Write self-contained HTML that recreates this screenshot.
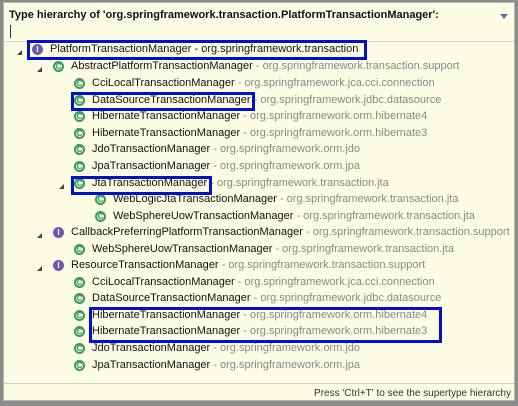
<!DOCTYPE html>
<html><head><style>
body{margin:0;width:518px;height:406px;overflow:hidden;background:#8c8c8c;font-family:"Liberation Sans",sans-serif;}
#w{position:absolute;left:3px;top:2px;width:512px;height:399px;background:#fdfde6;border:1px solid #b8b8a8;box-sizing:border-box;}
.t{position:absolute;left:5px;top:6px;font-weight:bold;font-size:11px;color:#111;}
.dd{position:absolute;left:496px;top:11px;width:0;height:0;border-left:4px solid transparent;border-right:4px solid transparent;border-top:5px solid #4a7ab0;}
.cur{position:absolute;left:6px;top:22px;width:1px;height:13px;background:#333;}
.sep{position:absolute;left:0;right:0;top:38px;border-top:1px solid #d8d8c8;}
.sb{position:absolute;left:0;right:0;top:380px;border-top:1px solid #d0d0c0;}
.st{position:absolute;right:3px;top:385px;font-size:10px;color:#333;}
.r{position:absolute;height:16px;font-size:11px;line-height:16px;white-space:nowrap;color:#111;}
.r span{color:#888;}
.ic{position:absolute;width:11px;height:11px;border-radius:50%;font-size:8px;line-height:8px;text-align:center;font-weight:bold;box-sizing:border-box;}
.g{border:2px solid #3a9a50;color:#3a9a50;background:#e8f5e8;}
.i{background:#6a5ab0;color:#fff;line-height:11px;}
.ar{position:absolute;width:0;height:0;border-left:5px solid transparent;border-bottom:5px solid #444;}
.bx{position:absolute;border:3px solid #0010d0;box-sizing:border-box;}
</style></head><body><div id="w">
<div class="t">Type hierarchy of 'org.springframework.transaction.PlatformTransactionManager':</div>
<div class="dd"></div><div class="cur"></div><div class="sep"></div>
<div class="sb"></div><div class="st">Press 'Ctrl+T' to see the supertype hierarchy</div>

<div class="ar" style="left:13px;top:47px"></div><div class="ic i" style="left:28px;top:41px">I</div><div class="r" style="left:46px;top:38px">PlatformTransactionManager - org.springframework.transaction</div>
<div class="ar" style="left:33px;top:64px"></div><div class="ic g" style="left:49px;top:58px">C</div><div class="r" style="left:67px;top:55px">AbstractPlatformTransactionManager <span>- org.springframework.transaction.support</span></div>
<div class="ic g" style="left:70px;top:75px">C</div><div class="r" style="left:88px;top:72px">CciLocalTransactionManager <span>- org.springframework.jca.cci.connection</span></div>
<div class="ic g" style="left:70px;top:92px">C</div><div class="r" style="left:88px;top:89px">DataSourceTransactionManager <span>- org.springframework.jdbc.datasource</span></div>
<div class="ic g" style="left:70px;top:108px">C</div><div class="r" style="left:88px;top:105px">HibernateTransactionManager <span>- org.springframework.orm.hibernate4</span></div>
<div class="ic g" style="left:70px;top:125px">C</div><div class="r" style="left:88px;top:122px">HibernateTransactionManager <span>- org.springframework.orm.hibernate3</span></div>
<div class="ic g" style="left:70px;top:141px">C</div><div class="r" style="left:88px;top:138px">JdoTransactionManager <span>- org.springframework.orm.jdo</span></div>
<div class="ic g" style="left:70px;top:158px">C</div><div class="r" style="left:88px;top:155px">JpaTransactionManager <span>- org.springframework.orm.jpa</span></div>
<div class="ar" style="left:55px;top:181px"></div><div class="ic g" style="left:70px;top:175px">C</div><div class="r" style="left:88px;top:172px">JtaTransactionManager <span>- org.springframework.transaction.jta</span></div>
<div class="ic g" style="left:91px;top:191px">C</div><div class="r" style="left:109px;top:188px">WebLogicJtaTransactionManager <span>- org.springframework.transaction.jta</span></div>
<div class="ic g" style="left:91px;top:208px">C</div><div class="r" style="left:109px;top:205px">WebSphereUowTransactionManager <span>- org.springframework.transaction.jta</span></div>
<div class="ar" style="left:33px;top:230px"></div><div class="ic i" style="left:49px;top:224px">I</div><div class="r" style="left:67px;top:221px">CallbackPreferringPlatformTransactionManager <span>- org.springframework.transaction.support</span></div>
<div class="ic g" style="left:70px;top:241px">C</div><div class="r" style="left:88px;top:238px">WebSphereUowTransactionManager <span>- org.springframework.transaction.jta</span></div>
<div class="ar" style="left:33px;top:263px"></div><div class="ic i" style="left:49px;top:257px">I</div><div class="r" style="left:67px;top:254px">ResourceTransactionManager <span>- org.springframework.transaction.support</span></div>
<div class="ic g" style="left:70px;top:274px">C</div><div class="r" style="left:88px;top:271px">CciLocalTransactionManager <span>- org.springframework.jca.cci.connection</span></div>
<div class="ic g" style="left:70px;top:290px">C</div><div class="r" style="left:88px;top:287px">DataSourceTransactionManager <span>- org.springframework.jdbc.datasource</span></div>
<div class="ic g" style="left:70px;top:307px">C</div><div class="r" style="left:88px;top:304px">HibernateTransactionManager <span>- org.springframework.orm.hibernate4</span></div>
<div class="ic g" style="left:70px;top:323px">C</div><div class="r" style="left:88px;top:320px">HibernateTransactionManager <span>- org.springframework.orm.hibernate3</span></div>
<div class="ic g" style="left:70px;top:340px">C</div><div class="r" style="left:88px;top:337px">JdoTransactionManager <span>- org.springframework.orm.jdo</span></div>
<div class="ic g" style="left:70px;top:357px">C</div><div class="r" style="left:88px;top:354px">JpaTransactionManager <span>- org.springframework.orm.jpa</span></div>

<div class="bx" style="left:23px;top:37px;width:340px;height:20px"></div>
<div class="bx" style="left:67px;top:89px;width:184px;height:19px"></div>
<div class="bx" style="left:67px;top:173px;width:141px;height:19px"></div>
<div class="bx" style="left:85px;top:304px;width:353px;height:36px"></div>
</div></body></html>
